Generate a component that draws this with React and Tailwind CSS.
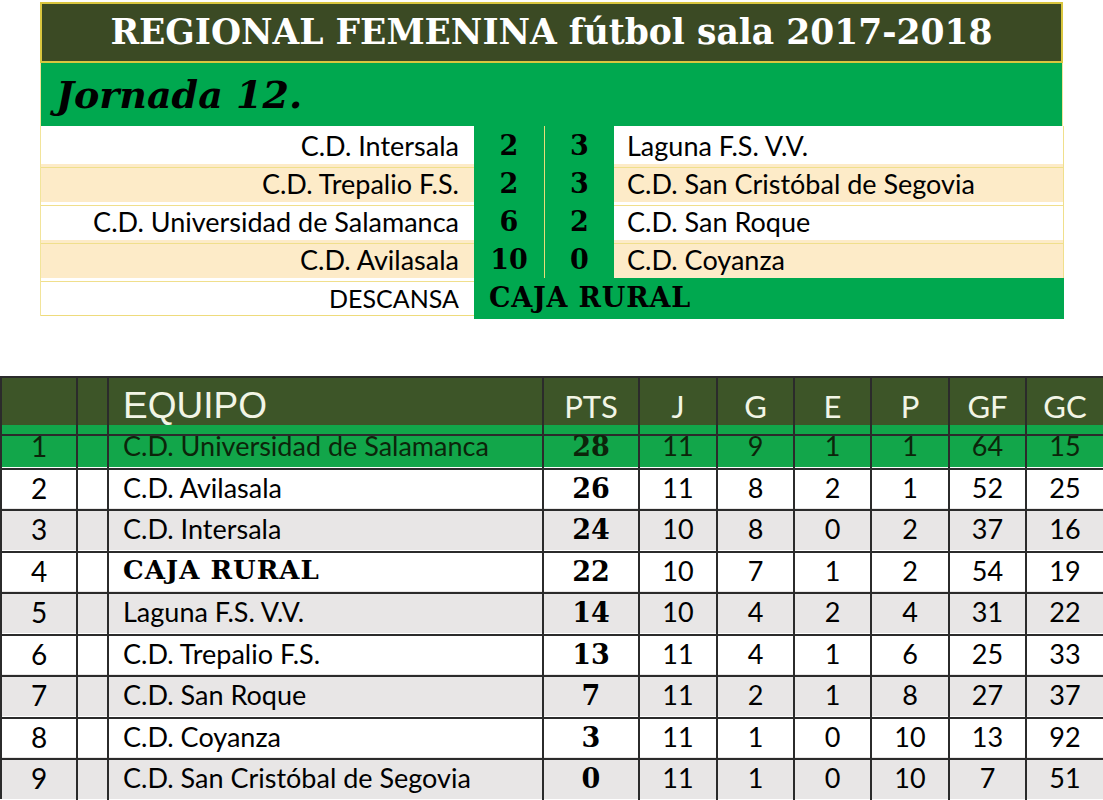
import React from 'react';

const results = [
  { home: 'C.D. Intersala', a: '2', b: '3', away: 'Laguna F.S. V.V.', beige: false },
  { home: 'C.D. Trepalio F.S.', a: '2', b: '3', away: 'C.D. San Cristóbal de Segovia', beige: true },
  { home: 'C.D. Universidad de Salamanca', a: '6', b: '2', away: 'C.D. San Roque', beige: false },
  { home: 'C.D. Avilasala', a: '10', b: '0', away: 'C.D. Coyanza', beige: true },
];

const standings = [
  ['1', 'C.D. Universidad de Salamanca', '28', '11', '9', '1', '1', '64', '15'],
  ['2', 'C.D. Avilasala', '26', '11', '8', '2', '1', '52', '25'],
  ['3', 'C.D. Intersala', '24', '10', '8', '0', '2', '37', '16'],
  ['4', 'CAJA RURAL', '22', '10', '7', '1', '2', '54', '19'],
  ['5', 'Laguna F.S. V.V.', '14', '10', '4', '2', '4', '31', '22'],
  ['6', 'C.D. Trepalio F.S.', '13', '11', '4', '1', '6', '25', '33'],
  ['7', 'C.D. San Roque', '7', '11', '2', '1', '8', '27', '37'],
  ['8', 'C.D. Coyanza', '3', '11', '1', '0', '10', '13', '92'],
  ['9', 'C.D. San Cristóbal de Segovia', '0', '11', '1', '0', '10', '7', '51'],
];

const slab = "font-['DejaVu_Serif','Liberation_Serif',serif] font-bold";
const cal = "font-['Lato','Open_Sans',sans-serif]";
const cols = 'grid grid-cols-[76px_31px_435px_96px_78px_77px_77px_78px_77px_78px]';
const cell = 'border-r-2 border-b-2 border-[#2b2b2b] flex items-center justify-center';

export default function App() {
  return (
    <div className="w-[1103px] h-[800px] bg-white overflow-hidden">
      {/* Jornada */}
      <div className="ml-[40px] w-[1023px] pt-[2px]">
        <div className="h-[61px] bg-[#3b4a24] border-2 border-[#d9c63f] flex items-center justify-center">
          <span className={`${slab} text-white text-[34.5px] leading-none`}>
            REGIONAL FEMENINA fútbol sala 2017-2018
          </span>
        </div>
        <div className="h-[63px] bg-[#00a84f] border-x border-[#f2e49a] flex items-center pl-[15px]">
          <span className={`${slab} italic text-black text-[38px] leading-none`}>Jornada 12.</span>
        </div>
        <div className="border-l border-[#f2e49a]">
          {results.map((r, i) => (
            <div key={i} className={`grid grid-cols-[433px_71px_69px_450px] h-[38px] ${r.beige ? 'bg-[#fdebc8]' : 'bg-white'}`}>
              <div className={`${cal} flex items-center justify-end pr-[15px] text-[27px] text-black border-b border-[#f0df8c]`}>{r.home}</div>
              <div className={`${slab} bg-[#00a84f] border-r border-b border-[#e8dd7a] flex items-center justify-center text-[27px] text-black`}>{r.a}</div>
              <div className={`${slab} bg-[#00a84f] border-b border-[#e8dd7a] flex items-center justify-center text-[27px] text-black`}>{r.b}</div>
              <div className={`${cal} flex items-center pl-[13px] text-[27px] text-black border-r border-b border-[#f0df8c]`}>{r.away}</div>
            </div>
          ))}
          <div className="grid grid-cols-[433px_590px] h-[38px] border-b border-[#eedb7c] bg-white">
            <div className={`${cal} flex items-center justify-end pr-[15px] text-[25px] text-black`}>DESCANSA</div>
            <div className={`${slab} bg-[#00a84f] flex items-center pl-[15px] text-[27px] tracking-[0.8px] text-black`}>CAJA RURAL</div>
          </div>
        </div>
      </div>

      {/* Clasificación */}
      <div className="mt-[60px] border-t-2 border-l-2 border-[#2b2b2b] w-[1103px]">
        <div className={`${cols} h-[47px] bg-[#3d5528] text-[#f2f5e6]`}>
          <div className={cell}></div>
          <div className={cell}></div>
          <div className={`${cell} !justify-start pl-[14px] text-[37px] font-['Liberation_Sans',Arial,sans-serif]`}>EQUIPO</div>
          {['PTS', 'J', 'G', 'E', 'P', 'GF', 'GC'].map(h => (
            <div key={h} className={`${cell} ${cal} text-[31px]`}>{h}</div>
          ))}
        </div>
        {standings.map((s, i) => {
          const bg = i === 0 ? 'bg-[#12a64a] text-[#0c250a]' : i % 2 === 1 ? 'bg-white text-black' : 'bg-[#e8e6e6] text-black';
          return (
            <div key={s[0]} className={`${cols} h-[41.5px] ${bg}`}>
              <div className={`${cell} ${cal} text-[28px]`}>{s[0]}</div>
              <div className={cell}></div>
              {s[1] === 'CAJA RURAL' ? (
                <div className={`${cell} ${slab} !justify-start pl-[14px] text-[26px] tracking-[1px]`}>{s[1]}</div>
              ) : (
                <div className={`${cell} ${cal} !justify-start pl-[14px] text-[27px]`}>{s[1]}</div>
              )}
              <div className={`${cell} ${slab} text-[27px] pt-[2px]`}>{s[2]}</div>
              {s.slice(3).map((v, j) => (
                <div key={j} className={`${cell} ${cal} text-[27px]`}>{v}</div>
              ))}
            </div>
          );
        })}
      </div>
    </div>
  );
}
